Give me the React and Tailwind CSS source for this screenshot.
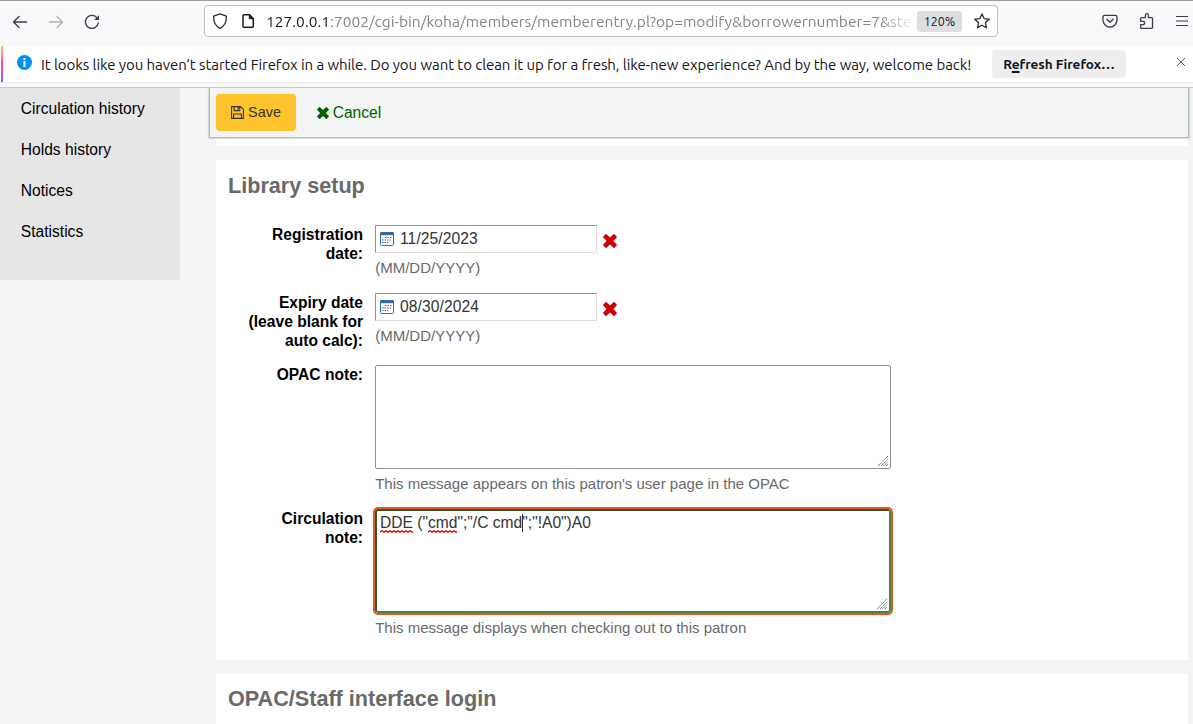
import React from "react";

const UI_FONT = "font-['Ubuntu','Noto_Sans',sans-serif]";

function BackIcon({ className }) {
  return (
    <svg className={className} width="16" height="16" viewBox="0 0 16 16" fill="none" stroke="currentColor" strokeWidth="1.4" strokeLinecap="round" strokeLinejoin="round">
      <path d="M14.5 8H1.5M7 2.5 1.5 8 7 13.5" />
    </svg>
  );
}

function ReloadIcon() {
  return (
    <svg width="16" height="16" viewBox="0 0 16 16" fill="none" stroke="#3c3c42" strokeWidth="1.4" strokeLinecap="round">
      <path d="M14.3 9A6.5 6.5 0 1 1 12.8 3.6" />
      <path d="M15 1.2V6H10.2Z" fill="#3c3c42" stroke="none" />
    </svg>
  );
}

function ShieldIcon() {
  return (
    <svg width="16" height="16" viewBox="0 0 16 16" fill="none" stroke="#2b2b31" strokeWidth="1.3" strokeLinejoin="round">
      <path d="M8 .8 14.4 3.2C14.6 8.8 12.4 13 8 15.3 3.6 13 1.4 8.8 1.6 3.2Z" />
    </svg>
  );
}

function PageIcon() {
  return (
    <svg width="14" height="16" viewBox="0 0 14 16" fill="none" stroke="#1c1b22" strokeWidth="1.5" strokeLinejoin="round">
      <path d="M8.5 1.7H3A1 1 0 0 0 2 2.7V13.3A1 1 0 0 0 3 14.3H11.3A1 1 0 0 0 12.3 13.3V5.5Z" />
      <path d="M8.3 1.7V5.7H12.3Z" fill="#1c1b22" strokeWidth="1" />
    </svg>
  );
}

function StarIcon() {
  return (
    <svg width="16" height="16" viewBox="0 0 16 16" fill="none" stroke="#2b2b31" strokeWidth="1.3" strokeLinejoin="round">
      <path d="M8 .9 10.1 5.6 15.2 6.2 11.4 9.7 12.4 14.8 8 12.3 3.6 14.8 4.6 9.7.8 6.2 5.9 5.6Z" />
    </svg>
  );
}

function PocketIcon() {
  return (
    <svg width="16" height="16" viewBox="0 0 16 16" fill="none" stroke="#3c3c42" strokeWidth="1.3" strokeLinecap="round" strokeLinejoin="round">
      <path d="M2.6 2.3H13.4A1.6 1.6 0 0 1 15 3.9V7A7 7 0 0 1 1 7V3.9A1.6 1.6 0 0 1 2.6 2.3Z" />
      <path d="M4.8 6.2 8 9.2 11.2 6.2" />
    </svg>
  );
}

function PuzzleIcon() {
  return (
    <svg width="16" height="18" viewBox="0 0 16 18" fill="none" stroke="#3c3c42" strokeWidth="1.3" strokeLinejoin="round">
      <path d="M6.4 5.6V3.2A1.5 1.5 0 0 1 9.4 3.2V5.6H12.6A.9.9 0 0 1 13.5 6.5V15.5A.9.9 0 0 1 12.6 16.4H2.5A.9.9 0 0 1 1.6 15.5V12.7H4A1.7 1.7 0 0 0 4 9.3H1.6V6.5A.9.9 0 0 1 2.5 5.6Z" />
    </svg>
  );
}

function MenuIcon() {
  return (
    <svg width="12" height="12" viewBox="0 0 12 12" stroke="#3c3c42" strokeWidth="1.2">
      <path d="M0 1.5H12M0 6H12M0 10.5H12" />
    </svg>
  );
}

function CrossIcon({ size, className }) {
  return (
    <svg className={className} width={size} height={size} viewBox="0 0 14 14" fill="currentColor">
      <path d="M3.5.3 7 3.6 10.5.3Q11-.1 11.5.3L13.7 2.5Q14.1 3 13.7 3.5L10.4 7 13.7 10.5Q14.1 11 13.7 11.5L11.5 13.7Q11 14.1 10.5 13.7L7 10.4 3.5 13.7Q3 14.1 2.5 13.7L.3 11.5Q-.1 11 .3 10.5L3.6 7 .3 3.5Q-.1 3 .3 2.5L2.5.3Q3-.1 3.5.3Z" />
    </svg>
  );
}

function SaveIcon() {
  return (
    <svg width="13" height="13" viewBox="0 0 13 13" fill="none" stroke="#333" strokeWidth="1.1" strokeLinejoin="round">
      <path d="M.6.6H9.6L12.4 3.4V12.4H.6Z" />
      <path d="M3.2.6V4.6H8.8V.6M2.6 12.2V8H10.4V12.2" />
      <path d="M6.4 1.2H7.8V3.6H6.4Z" fill="#333" stroke="none" />
    </svg>
  );
}

function CalendarIcon() {
  return (
    <svg className="shrink-0" width="14" height="14" viewBox="0 0 14 14">
      <rect x=".5" y=".5" width="13" height="13" rx="1" fill="#fff" stroke="#35699f" />
      <path d="M.5 0H13.5V3.2H.5Z" fill="#35699f" />
      <path d="M5 5.5H12M2 8H12M2 10.5H9.5" stroke="#35699f" strokeWidth="1.2" strokeDasharray="1.5 1" />
    </svg>
  );
}

function ResizeGrip() {
  return (
    <svg className="absolute right-px bottom-px" width="12" height="12" viewBox="0 0 12 12" stroke="#666" strokeWidth="1" strokeDasharray="1.2 .4">
      <path d="M1 11 11 1M4 11 11 4M6.5 11 11 6.5M9 11 11 9" />
    </svg>
  );
}

function Row({ label, children, className }) {
  return (
    <div className={`flex gap-3 ${className}`}>
      <div className="w-[135px] shrink-0 text-right font-bold leading-[19px] whitespace-pre-line text-black">{label}</div>
      <div>{children}</div>
    </div>
  );
}

function Hint({ children }) {
  return <div className="mt-[5px] pl-[0.2px] text-[15px] leading-[19px] text-[#696969]">{children}</div>;
}

function DateField({ value }) {
  return (
    <>
      <div className="flex items-center gap-1.5">
        <div className="flex h-[28px] w-[222px] items-center gap-[6px] border border-t-[#8f8f9d] border-r-[#ddd] border-b-[#ddd] border-l-[#8f8f9d] pl-1">
          <CalendarIcon />
          <span className="tracking-[0.1px] text-[#333]">{value}</span>
        </div>
        <CrossIcon size={14} className="relative top-[2px] text-[#c00]" />
      </div>
      <Hint>(MM/DD/YYYY)</Hint>
    </>
  );
}

function Misspelt({ children }) {
  return (
    <span className="relative inline-block">
      {children}
      <svg className="absolute bottom-[-1px] left-0 h-[3px] w-full" fill="none" stroke="#f00000" strokeWidth="1.3">
        <path d="M0 2.3 L2 .7 L4 2.3 L6 .7 L8 2.3 L10 .7 L12 2.3 L14 .7 L16 2.3 L18 .7 L20 2.3 L22 .7 L24 2.3 L26 .7 L28 2.3 L30 .7 L32 2.3 L34 .7" />
      </svg>
    </span>
  );
}

export default function App() {
  return (
    <div className="flex h-[724px] w-[1193px] flex-col overflow-hidden bg-[#f3f4f4] font-['Liberation_Sans',Arial,sans-serif] text-[15.6px]">
      <header className={`shrink-0 border-t border-[#9d9c9e] bg-[#f9f9fb] ${UI_FONT}`}>
        <div className="flex h-[45px] items-start">
          <div className="flex w-[204px] items-center gap-5 pt-[13px] pl-3">
            <BackIcon className="text-[#3c3c42]" />
            <BackIcon className="rotate-180 text-[#b2b2b5]" />
            <ReloadIcon />
          </div>
          <div className="mt-1 flex h-[32px] w-[794px] items-center rounded border border-[#bfbfc2] bg-white pl-[7px]">
            <ShieldIcon />
            <span className="ml-[13px]"><PageIcon /></span>
            <div className="relative top-[0.5px] ml-[11px] w-[645px] text-[15.5px] tracking-[0.02px] whitespace-nowrap text-[#858589] [mask-image:linear-gradient(to_right,black_615px,transparent_648px)]">
              <span className="text-[#15141a]">127.0.0.1</span>:7002/cgi-bin/koha/members/memberentry.pl?op=modify&amp;borrowernumber=7&amp;ste
            </div>
            <span className="ml-[6px] flex h-[21px] w-[45px] shrink-0 items-center justify-center rounded-[3px] bg-[#dedee0] text-[12.5px] text-[#15141a]">120%</span>
            <span className="ml-3"><StarIcon /></span>
          </div>
          <div className="flex h-[40px] flex-1 items-center pl-[104px]">
            <PocketIcon />
            <span className="ml-[21px]"><PuzzleIcon /></span>
            <span className="ml-[21px]"><MenuIcon /></span>
          </div>
        </div>
        <div className="flex h-[37px] items-center border-b border-[#e8e8ea] bg-white text-[#15141a]">
          <div className="ml-px h-[36px] w-[2px] bg-linear-to-b from-[#ffbd4f] via-[#ff3e9d] to-[#9059ff]" />
          <div className="relative -top-[2px] ml-[14px] flex h-[15px] w-[15px] items-center justify-center rounded-full bg-[#0090ed]">
            <svg width="3" height="9" viewBox="0 0 3 9" fill="#fff"><path d="M.5 0H2.5V2H.5ZM.5 3H2.5V9H.5Z" /></svg>
          </div>
          <span className="relative top-px ml-[9px] w-[951px] shrink-0 text-[15px] tracking-[-0.065px] whitespace-nowrap">It looks like you haven’t started Firefox in a while. Do you want to clean it up for a fresh, like-new experience? And by the way, welcome back!</span>
          <button className="h-[28px] w-[134px] shrink-0 rounded bg-[#eeeeef] pt-px text-[13.5px] font-bold whitespace-nowrap">R<span className="underline decoration-2 underline-offset-2">e</span>fresh Firefox…</button>
          <svg className="relative -top-[2px] ml-[50px]" width="10" height="10" viewBox="0 0 10 10" stroke="#5b5b66"><path d="M1 1 9 9M9 1 1 9" /></svg>
        </div>
        <div className="h-[5px] border-b border-[#c6c6c8]" />
      </header>

      <div className="flex min-h-0 flex-1">
        <nav className="flex h-[192px] w-[180px] shrink-0 flex-col bg-[#e6e6e6] pl-[20.8px] text-black">
          <a className="h-[41px] leading-[41px]">Circulation history</a>
          <a className="h-[41px] leading-[41px]">Holds history</a>
          <a className="h-[41px] leading-[41px]">Notices</a>
          <a className="h-[41px] leading-[41px]">Statistics</a>
        </nav>

        <main className="ml-[29px] flex w-[980px] flex-col">
          <div className="flex h-[50px] shrink-0 items-start gap-5 border border-t-0 border-[#b3b7b7] pt-[6px] pl-[6px] shadow-[0_0_2px_rgba(0,0,0,0.35)] [clip-path:inset(0_-3px_-3px_-3px)]">
            <button className="flex h-[37px] w-[80px] items-center justify-center gap-1 rounded bg-[#ffc32b] text-[14.4px] text-[#333]">
              <SaveIcon />
              Save
            </button>
            <a className="flex h-[37px] items-center gap-[4.7px] text-[#006100]">
              <CrossIcon size={12} className="relative left-[0.5px]" />
              Cancel
            </a>
          </div>
          <div className="mr-px ml-[7px] h-2 shrink-0 bg-white" />

          <section className="mt-[14px] mr-px ml-[7px] h-[500px] shrink-0 bg-white pt-3 pl-3">
            <h2 className="text-[21.6px] leading-[28px] font-bold text-[#696969]">Library setup</h2>
            <Row label={"Registration\ndate:"} className="mt-[25px] h-[68px]">
              <DateField value="11/25/2023" />
            </Row>
            <Row label={"Expiry date\n(leave blank for\nauto calc):"} className="h-[72px]">
              <DateField value="08/30/2024" />
            </Row>
            <Row label="OPAC note:" className="h-[144px]">
              <div className="relative h-[104px] w-[516px] rounded-[2px] border border-[#8f8f9d]">
                <ResizeGrip />
              </div>
              <Hint>This message appears on this patron's user page in the OPAC</Hint>
            </Row>
            <Row label={"Circulation\nnote:"} className="">
              <div className="relative h-[104px] w-[516px] rounded-[3px] border-2 border-t-[#2c5a2c] border-r-[#418940] border-b-[#418940] border-l-[#2c5a2c] pt-[2px] pl-[3px] leading-[19px] text-[#333] outline-2 outline-[#e95420]">
                <Misspelt>DDE</Misspelt> ("<Misspelt>cmd</Misspelt>";"/C cmd<span className="-mr-px inline-block h-[18px] w-px bg-[#333] align-[-4px]" />";"!A0")A0
                <ResizeGrip />
              </div>
              <Hint>This message displays when checking out to this patron</Hint>
            </Row>
          </section>

          <section className="mt-[14px] mr-px ml-[7px] h-[50px] shrink-0 bg-white pt-[11px] pl-3">
            <h2 className="text-[21.6px] leading-[28px] font-bold text-[#696969]">OPAC/Staff interface login</h2>
          </section>
        </main>
      </div>
    </div>
  );
}
